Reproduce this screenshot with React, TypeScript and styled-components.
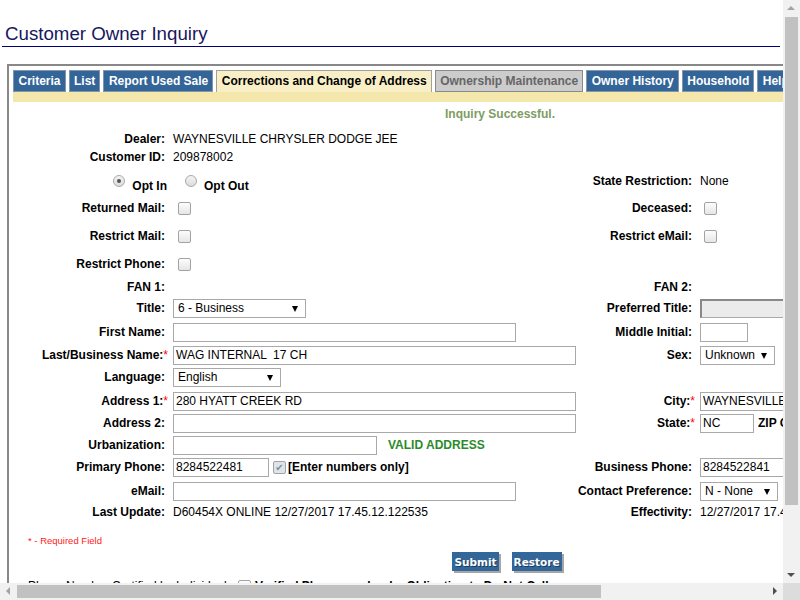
import React from "react";
import styled, { createGlobalStyle, css } from "styled-components";

const Global = createGlobalStyle`
  html, body { margin: 0; padding: 0; overflow: hidden; background: #fff; }
  body { font-family: "Liberation Sans", Arial, sans-serif; font-size: 12px; color: #000; }
`;

const Page = styled.div`
  width: 1004px;
  height: 660px;
`;

const Header = styled.h1`
  margin: 0 0 0 2px;
  width: 778px;
  box-sizing: border-box;
  padding: 23px 0 2px 3px;
  font-size: 18.7px;
  font-weight: normal;
  line-height: 21px;
  color: #17175e;
  border-bottom: 1px solid #00007a;
`;

const Panel = styled.div`
  margin: 17px 0 0 7px;
  width: 986px;
  box-sizing: border-box;
  border: 2px solid #888;
  padding: 4px 4px 0 4px;
  height: 600px;
`;

const Tabs = styled.div`
  display: flex;
  gap: 3px;
  height: 22px;
`;

type TabKind = "normal" | "active" | "disabled";

const Tab = styled.div<{ $kind: TabKind }>`
  box-sizing: border-box;
  height: 22px;
  padding: 0 4px 0 4.5px;
  line-height: 20px;
  font-weight: bold;
  font-size: 12px;
  white-space: nowrap;
  border: 1px solid #8295aa;
  ${(p) =>
    p.$kind === "normal" &&
    css`
      background: #346598;
      color: #fff;
    `}
  ${(p) =>
    p.$kind === "active" &&
    css`
      background: #f8efc6;
      color: #000;
      border-color: #a0a0a0;
      border-bottom: none;
    `}
  ${(p) =>
    p.$kind === "disabled" &&
    css`
      background: #cccccc;
      color: #666;
      border-color: #8a8a8a;
    `}
`;

const Band = styled.div`
  height: 10px;
  background: #f3e7ab;
`;

const Message = styled.div`
  margin-top: 4px;
  height: 16px;
  line-height: 16px;
  text-align: center;
  font-weight: bold;
  color: #7e9c62;
`;

const Row = styled.div<{ $h: number; $mt: number }>`
  display: grid;
  grid-template-columns: 160px 404px 123px 1fr;
  align-items: center;
  height: ${(p) => p.$h}px;
  margin-top: ${(p) => p.$mt}px;
`;

const Label = styled.div`
  text-align: right;
  padding-right: 8px;
  font-weight: bold;
  white-space: nowrap;
`;

const Req = styled.span`
  color: #f00;
  font-weight: normal;
  margin-right: -3px;
`;

const Cell = styled.div`
  display: flex;
  align-items: center;
  white-space: nowrap;
  overflow: visible;
`;

const RadioCell = styled(Cell)<{ $right?: boolean }>`
  justify-content: ${(p) => (p.$right ? "flex-end" : "flex-start")};
  padding-right: ${(p) => (p.$right ? "6px" : "0")};
  padding-left: ${(p) => (p.$right ? "0" : "12px")};
  padding-top: 10px;
  font-weight: bold;
`;

const Radio = styled.span<{ $on?: boolean }>`
  box-sizing: border-box;
  width: 12px;
  height: 12px;
  border-radius: 50%;
  border: 1px solid #a9a9a9;
  background: linear-gradient(#f4f4f4, #dcdcdc);
  margin-right: 7px;
  transform: translateY(-5px);
  display: flex;
  align-items: center;
  justify-content: center;
  &::after {
    content: "";
    width: 4px;
    height: 4px;
    border-radius: 50%;
    background: ${(p) => (p.$on ? "#555" : "transparent")};
  }
`;

const Box = styled.span<{ $checked?: boolean; $ml?: number }>`
  box-sizing: border-box;
  width: 13px;
  height: 13px;
  margin-left: ${(p) => p.$ml ?? 5}px;
  border: 1px solid #a3a3a3;
  border-radius: 2px;
  background: ${(p) => (p.$checked ? "#dfe4ea" : "linear-gradient(#fcfcfc, #e6e6e6)")};
  color: #7c8ea3;
  font-size: 10px;
  line-height: 11px;
  text-align: center;
  font-family: "DejaVu Sans", sans-serif;
`;

const Input = styled.input<{ $w: number }>`
  box-sizing: border-box;
  width: ${(p) => p.$w}px;
  height: 19px;
  margin: 0;
  padding: 0 2px;
  border: 1px solid #a9a9a9;
  font-family: "Liberation Sans", Arial, sans-serif;
  font-size: 12px;
  color: #000;
  background: #fff;
  outline: none;
`;

const SelectWrap = styled.div<{ $w: number; $disabled?: boolean }>`
  position: relative;
  box-sizing: border-box;
  width: ${(p) => p.$w}px;
  height: 19px;
  border: 1px solid #a9a9a9;
  background: ${(p) => (p.$disabled ? "#ebebeb" : "#fff")};
  ${(p) =>
    p.$disabled &&
    css`
      border-left: 2px solid #888;
      border-top: 2px solid #888;
    `}
`;

const SelectBox = styled.select`
  appearance: none;
  -webkit-appearance: none;
  box-sizing: border-box;
  width: 100%;
  height: 100%;
  margin: 0;
  padding: 0 0 0 4px;
  border: none;
  background: transparent;
  font-family: "Liberation Sans", Arial, sans-serif;
  font-size: 12px;
  color: #000;
  outline: none;
`;

const Arrow = styled.span`
  position: absolute;
  right: 7px;
  top: 6px;
  width: 0;
  height: 0;
  border-left: 3.5px solid transparent;
  border-right: 3.5px solid transparent;
  border-top: 6px solid #000;
  pointer-events: none;
`;

const Valid = styled.span`
  margin-left: 11px;
  color: #2b8a2b;
  font-weight: bold;
`;

const Hint = styled.span`
  margin-left: 2px;
  font-weight: bold;
`;

const After = styled.span`
  margin-left: 4px;
  font-weight: bold;
`;

const Notes = styled.div`
  margin-top: 14px;
  padding-left: 15px;
  height: 14px;
  line-height: 14px;
  font-size: 9.5px;
  color: #ff1a1a;
`;

const Buttons = styled.div`
  margin-top: 4px;
  display: flex;
  justify-content: center;
  gap: 13px;
  padding-left: 14px;
  height: 22px;
`;

const Button = styled.button`
  box-sizing: border-box;
  height: 19px;
  margin: 0;
  padding: 0 2px;
  border: none;
  background: #336699;
  color: #fff;
  font-family: "DejaVu Sans", Verdana, sans-serif;
  font-weight: bold;
  font-size: 10.5px;
  text-shadow: 1px 1px 0 #1c3a5a;
  box-shadow: 2px 2px 0 #a6a6a6;
`;

const Footer = styled.div`
  margin-top: 4px;
  padding-left: 15px;
  display: flex;
  align-items: center;
  height: 16px;
`;

/* fake browser scrollbars (overlay) */
const VBar = styled.div`
  position: fixed;
  right: 0;
  top: 0;
  width: 17px;
  height: 583px;
  background: #f1f1f1;
`;

const HBar = styled.div`
  position: fixed;
  left: 0;
  bottom: 0;
  width: 783px;
  height: 17px;
  background: #f1f1f1;
`;

const Corner = styled.div`
  position: fixed;
  right: 0;
  bottom: 0;
  width: 17px;
  height: 17px;
  background: #dcdcdc;
`;

const Thumb = styled.div<{ $vertical?: boolean }>`
  position: absolute;
  background: #c1c1c1;
  ${(p) =>
    p.$vertical
      ? css`
          left: 2px;
          width: 13px;
          top: 17px;
          height: 488px;
        `
      : css`
          top: 2px;
          height: 13px;
          left: 17px;
          width: 584px;
        `}
`;

type Dir = "up" | "down" | "left" | "right";
const ArrowBtn = styled.div<{ $dir: Dir; $dim?: boolean }>`
  position: absolute;
  width: 0;
  height: 0;
  ${(p) => {
    const c = p.$dim ? "#a3a3a3" : "#505050";
    switch (p.$dir) {
      case "up":
        return css`
          left: 4px;
          top: 6px;
          border-left: 4px solid transparent;
          border-right: 4px solid transparent;
          border-bottom: 4px solid ${c};
        `;
      case "down":
        return css`
          left: 4px;
          bottom: 6px;
          border-left: 4px solid transparent;
          border-right: 4px solid transparent;
          border-top: 4px solid ${c};
        `;
      case "left":
        return css`
          left: 6px;
          top: 4px;
          border-top: 4px solid transparent;
          border-bottom: 4px solid transparent;
          border-right: 4px solid ${c};
        `;
      default:
        return css`
          right: 6px;
          top: 4px;
          border-top: 4px solid transparent;
          border-bottom: 4px solid transparent;
          border-left: 4px solid ${c};
        `;
    }
  }}
`;

const Select: React.FC<{ w: number; value: string; disabled?: boolean }> = ({ w, value, disabled }) => (
  <SelectWrap $w={w} $disabled={disabled}>
    {!disabled && (
      <>
        <SelectBox defaultValue={value}>
          <option value={value}>{value}</option>
        </SelectBox>
        <Arrow />
      </>
    )}
  </SelectWrap>
);

const L: React.FC<{ text: string; req?: boolean }> = ({ text, req }) => (
  <Label>
    {text}
    {req && <Req>*</Req>}
  </Label>
);

export default function App() {
  return (
    <Page>
      <Global />
      <Header>Customer Owner Inquiry</Header>
      <Panel>
        <Tabs>
          <Tab $kind="normal">Criteria</Tab>
          <Tab $kind="normal">List</Tab>
          <Tab $kind="normal">Report Used Sale</Tab>
          <Tab $kind="active">Corrections and Change of Address</Tab>
          <Tab $kind="disabled">Ownership Maintenance</Tab>
          <Tab $kind="normal">Owner History</Tab>
          <Tab $kind="normal">Household</Tab>
          <Tab $kind="normal">Help</Tab>
        </Tabs>
        <Band />
        <Message>Inquiry Successful.</Message>

        <Row $h={16} $mt={9}>
          <L text="Dealer:" />
          <Cell>WAYNESVILLE CHRYSLER DODGE JEE</Cell>
          <div />
          <div />
        </Row>
        <Row $h={16} $mt={2}>
          <L text="Customer ID:" />
          <Cell>209878002</Cell>
          <div />
          <div />
        </Row>
        <Row $h={18} $mt={4}>
          <RadioCell $right>
            <Radio $on />
            Opt In
          </RadioCell>
          <RadioCell>
            <Radio />
            Opt Out
          </RadioCell>
          <L text="State Restriction:" />
          <Cell>None</Cell>
        </Row>
        <Row $h={18} $mt={12}>
          <L text="Returned Mail:" />
          <Cell>
            <Box />
          </Cell>
          <L text="Deceased:" />
          <Cell>
            <Box $ml={4} />
          </Cell>
        </Row>
        <Row $h={18} $mt={10}>
          <L text="Restrict Mail:" />
          <Cell>
            <Box />
          </Cell>
          <L text="Restrict eMail:" />
          <Cell>
            <Box $ml={4} />
          </Cell>
        </Row>
        <Row $h={18} $mt={10}>
          <L text="Restrict Phone:" />
          <Cell>
            <Box />
          </Cell>
          <div />
          <div />
        </Row>
        <Row $h={16} $mt={6}>
          <L text="FAN 1:" />
          <div />
          <L text="FAN 2:" />
          <div />
        </Row>
        <Row $h={20} $mt={3}>
          <L text="Title:" />
          <Cell>
            <Select w={133} value="6 - Business" />
          </Cell>
          <L text="Preferred Title:" />
          <Cell>
            <Select w={120} value="" disabled />
          </Cell>
        </Row>
        <Row $h={20} $mt={4}>
          <L text="First Name:" />
          <Cell>
            <Input $w={343} defaultValue="" />
          </Cell>
          <L text="Middle Initial:" />
          <Cell>
            <Input $w={48} defaultValue="" />
          </Cell>
        </Row>
        <Row $h={20} $mt={3}>
          <L text="Last/Business Name:" req />
          <Cell>
            <Input $w={403} defaultValue="WAG INTERNAL  17 CH" />
          </Cell>
          <L text="Sex:" />
          <Cell>
            <Select w={75} value="Unknown" />
          </Cell>
        </Row>
        <Row $h={20} $mt={2}>
          <L text="Language:" />
          <Cell>
            <Select w={108} value="English" />
          </Cell>
          <div />
          <div />
        </Row>
        <Row $h={20} $mt={4}>
          <L text="Address 1:" req />
          <Cell>
            <Input $w={403} defaultValue="280 HYATT CREEK RD" />
          </Cell>
          <L text="City:" req />
          <Cell>
            <Input $w={200} defaultValue="WAYNESVILLE" />
          </Cell>
        </Row>
        <Row $h={20} $mt={2}>
          <L text="Address 2:" />
          <Cell>
            <Input $w={403} defaultValue="" />
          </Cell>
          <L text="State:" req />
          <Cell>
            <Input $w={54} defaultValue="NC" />
            <After>ZIP Code:</After>
          </Cell>
        </Row>
        <Row $h={20} $mt={2}>
          <L text="Urbanization:" />
          <Cell>
            <Input $w={204} defaultValue="" />
            <Valid>VALID ADDRESS</Valid>
          </Cell>
          <div />
          <div />
        </Row>
        <Row $h={20} $mt={2}>
          <L text="Primary Phone:" />
          <Cell>
            <Input $w={96} defaultValue="8284522481" />
            <Box $checked $ml={4}>
              ✔
            </Box>
            <Hint>[Enter numbers only]</Hint>
          </Cell>
          <L text="Business Phone:" />
          <Cell>
            <Input $w={96} defaultValue="8284522841" />
          </Cell>
        </Row>
        <Row $h={20} $mt={4}>
          <L text="eMail:" />
          <Cell>
            <Input $w={343} defaultValue="" />
          </Cell>
          <L text="Contact Preference:" />
          <Cell>
            <Select w={78} value="N - None" />
          </Cell>
        </Row>
        <Row $h={16} $mt={3}>
          <L text="Last Update:" />
          <Cell>D60454X ONLINE 12/27/2017 17.45.12.122535</Cell>
          <L text="Effectivity:" />
          <Cell>12/27/2017 17.45.12.122535</Cell>
        </Row>

        <Notes>* - Required Field</Notes>

        <Buttons>
          <Button>Submit</Button>
          <Button>Restore</Button>
        </Buttons>

        <Footer>
          Phone Number Certified by Individual:
          <Box $ml={8} />
          <After>Verified Phone number by Obligation to Do Not Call</After>
        </Footer>
      </Panel>

      <VBar>
        <ArrowBtn $dir="up" $dim />
        <Thumb $vertical />
        <ArrowBtn $dir="down" />
      </VBar>
      <HBar>
        <ArrowBtn $dir="left" $dim />
        <Thumb />
        <ArrowBtn $dir="right" />
      </HBar>
      <Corner />
    </Page>
  );
}
